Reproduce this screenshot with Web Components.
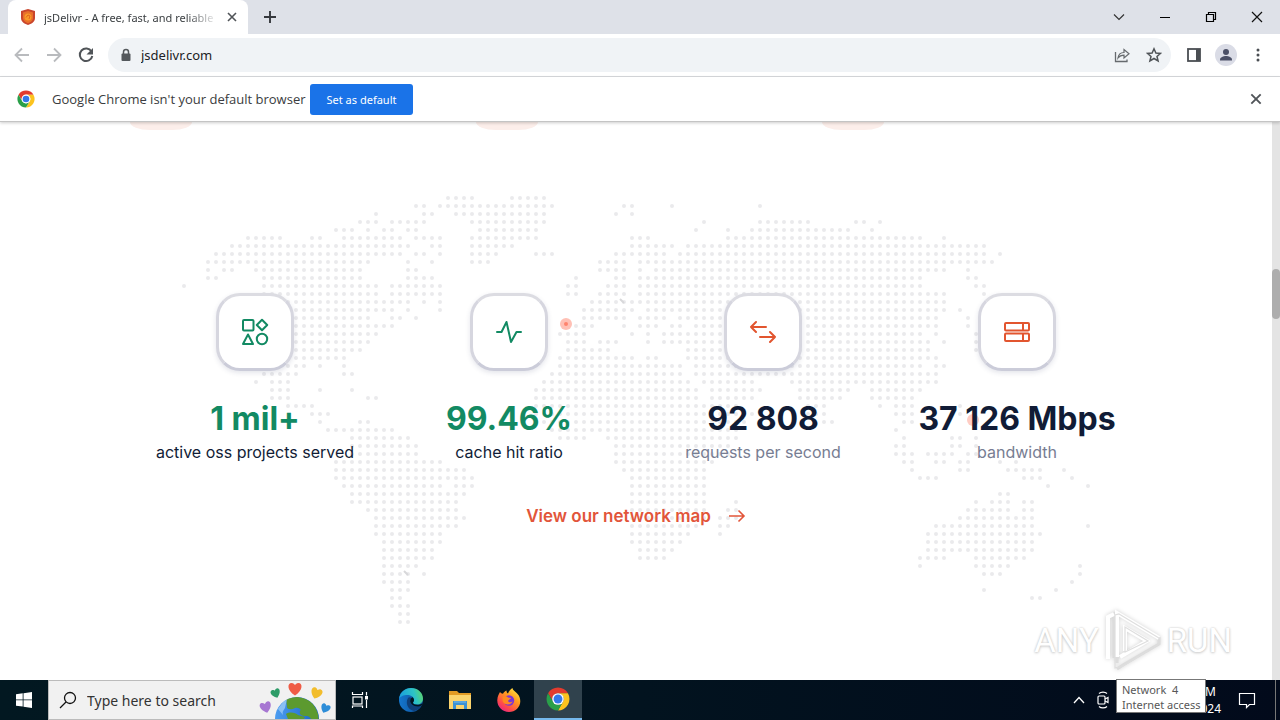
<!DOCTYPE html>
<html lang="en">
<head>
<meta charset="utf-8">
<title>jsDelivr - A free, fast, and reliable CDN</title>
<style>
html, body { margin: 0; height: 100%; }
body { font-family: "Noto Sans", "Open Sans", sans-serif; background: #fff; overflow: hidden; }
</style>
</head>
<body>
<desktop-screen></desktop-screen>
<script>
const chromeArc = 'M4.95 13A22 22 0 0 1 43.05 13L24 13A11 11 0 0 0 14.47 29.5Z';
const ICONS = {
  shield: ['0 0 16 16', '<path d="M8 0 15 2v7c0 4-4 6-7 7-3-1-7-3-7-7V2z" fill="#c9452c"/><path d="M8 2l5 1.500v5.500c0 3-3 4.500-5 5.300-2-.8-5-2.300-5-5.300V3.500z" fill="#e8702a"/><circle cx="8" cy="8" r="3.500" fill="#f99a28"/><path d="M6 8.500 8 6l2 1-1 3" stroke="#e0641f" fill="none"/>'],
  close: ['0 0 12 12', '<path d="M2 2l8 8M10 2l-8 8" stroke="#505458" stroke-width="1.600"/>'],
  plus: ['0 0 12 12', '<path d="M6 0v12M0 6h12" stroke="#35383d" stroke-width="1.900"/>'],
  chevron: ['0 0 12 12', '<path d="M1 3.500l5 5 5-5" stroke="#333" fill="none" stroke-width="1.200"/>'],
  minimize: ['0 0 12 12', '<path d="M1 6.500h10" stroke="#000"/>'],
  restore: ['0 0 12 12', '<path d="M1.500 3.500h7v7h-7zM3.500 3.500v-2h7v7h-2" stroke="#000" fill="none" stroke-width="1.200"/>'],
  winclose: ['0 0 12 12', '<path d="M1 1l10 10M11 1L1 11" stroke="#111" stroke-width="1.200"/>'],
  back: ['0 0 16 16', '<path d="M15 8H2M8 1.500 1.500 8 8 14.500" stroke="#b9bbbe" fill="none" stroke-width="1.800"/>'],
  forward: ['0 0 16 16', '<path d="M1 8h13M8 1.500 14.500 8 8 14.500" stroke="#b9bbbe" fill="none" stroke-width="1.800"/>'],
  reload: ['0 0 16 16', '<path d="M13.500 4.500A6.300 6.300 0 1 0 14.300 9" stroke="#505458" fill="none" stroke-width="2"/><path d="M15 1v6.500H8.500z" fill="#505458"/>'],
  lock: ['0 0 12 14', '<path d="M3.500 6V4a2.500 2.500 0 0 1 5 0v2" stroke="#54585c" fill="none" stroke-width="1.500"/><rect x="1.500" y="5.500" width="9" height="7.500" rx="1" fill="#54585c"/>'],
  share: ['0 0 16 16', '<path d="M1.500 5v9.500H13v-2" stroke="#666a6e" fill="none" stroke-width="1.300"/><path d="M4 11c.5-4 3-5.500 6-5.500V2.500l5 4.300-5 4.200V8.200C7.500 8.200 5.500 9 4 11z" fill="none" stroke="#666a6e" stroke-width="1.200"/>'],
  star: ['0 0 16 16', '<path d="M8 1.800 9.900 6l4.600.4-3.500 3 1.100 4.600L8 11.500 3.900 14 5 9.400l-3.500-3L6.100 6z" fill="none" stroke="#505458" stroke-width="1.500"/>'],
  panel: ['0 0 14 14', '<rect x="1" y="1" width="12" height="12" fill="#fff" stroke="#4a4e53" stroke-width="1.800"/><path d="M9 1h4v12H9z" fill="#4a4e53"/>'],
  person: ['0 0 22 22', '<circle cx="11" cy="11" r="11" fill="#dadce6"/><circle cx="11" cy="8" r="3" fill="#4a4f66"/><path d="M5 16.500v-1c0-2 3.500-3.500 6-3.500s6 1.500 6 3.500v1z" fill="#4a4f66"/>'],
  kebab: ['0 0 4 16', '<g fill="#4a4e53"><circle cx="2" cy="3" r="1.500"/><circle cx="2" cy="8" r="1.500"/><circle cx="2" cy="13" r="1.500"/></g>'],
  chrome: ['1 1 46 46', `<path d="${chromeArc}" fill="#e33b2e"/><path d="${chromeArc}" fill="#fcc31e" transform="rotate(120 24 24)"/><path d="${chromeArc}" fill="#2a9f49" transform="rotate(240 24 24)"/><circle cx="24" cy="24" r="11.200" fill="#fff"/><circle cx="24" cy="24" r="8.500" fill="#3478ea"/>`],
  shapes: ['0 0 28 28', '<g fill="none" stroke="#128a63" stroke-width="2" stroke-linejoin="round"><rect x="2" y="2" width="10.500" height="10.500" rx="1"/><path d="M21 1.800 26.200 7 21 12.200 15.800 7zM7 16.500 12 26H2z"/><circle cx="21" cy="21" r="5.200"/></g>'],
  pulse: ['0 0 28 28', '<path d="M2 14h4.500L11.500 4 16 24l5.500-10H26" fill="none" stroke="#128a63" stroke-width="2" stroke-linejoin="round" stroke-linecap="round"/>'],
  swap: ['0 0 28 28', '<path d="M17 9H2M7 4 2 9l5 5M11 19h15M21 14l5 5-5 5" fill="none" stroke="#e2552f" stroke-width="2" stroke-linecap="round" stroke-linejoin="round"/>'],
  server: ['0 0 28 28', '<g fill="none" stroke="#e2552f" stroke-width="2"><rect x="2" y="5" width="24" height="7.500" rx="1"/><rect x="2" y="15.500" width="24" height="7.500" rx="1"/><path d="M20 5v7.500M20 15.500V23"/></g>'],
  arrow: ['0 0 18 16', '<path d="M1 8h15M10.500 2.500 16 8l-5.500 5.500" fill="none" stroke="#e2553a" stroke-width="1.600"/>'],
  windows: ['0 0 16 16', '<path d="M0 2.200 6.700 1.300v6.200H0zM7.500 1.200 16 0v7.500H7.500zM0 8.300h6.700v6.300L0 13.700zM7.500 8.300H16V16l-8.500-1.200z" fill="#fff"/>'],
  search: ['0 0 18 18', '<circle cx="11" cy="7" r="5.500" fill="none" stroke="#111" stroke-width="1.300"/><path d="M7 11l-6 6" stroke="#111" stroke-width="1.300"/>'],
  taskview: ['0 0 18 18', '<g fill="none" stroke="#fff" stroke-width="1.200"><rect x="2" y="6" width="9" height="7"/><path d="M1.500 1v2.500h10V1M1.500 17v-2h10v2M15.500 1v3.500M15.500 9v8"/></g><path d="M14 5h3v3.500h-3z" fill="#fff"/>'],
  edge: ['0 0 24 24', '<defs><linearGradient id="a" x1="0" x2="1" y1=".3" y2=".1"><stop stop-color="#1a9fdc"/><stop offset=".6" stop-color="#2dc3c6"/><stop offset="1" stop-color="#62d860"/></linearGradient><linearGradient id="b" x1="0" x2="1"><stop stop-color="#1477cf"/><stop offset="1" stop-color="#0d4b93"/></linearGradient></defs><circle cx="12" cy="12" r="12" fill="url(#b)"/><path d="M0 11C1 4 6 0 12 0c7 0 12 5 12 10.500 0 4-3 6-6 6-2.500 0-4-.8-4-1.800 0-.7 1-1 1-2.700 0-2.500-2.500-5-6.500-5S1 8.500 0 11z" fill="url(#a)"/><path d="M9 10c-3 5 0 12 6 13 3-.5 6-2.500 7.500-5.500-4 2-10 1-11-3-.4-1.700 0-3.500 1-4.500-1-1-3-.8-3.500 0z" fill="#0f3f78"/><path d="M14 14.700c0-.7 1-1 1-2.700 0-1-.5-2-1.300-2.800-2 .5-3 3.300-2.200 5.300 1.300 3 5.500 4.500 9 3.700l2-.7 1-2c-5 2.500-9.500.7-9.500-.8z" fill="#021520"/>'],
  folder: ['0 0 22 20', '<path d="M0 1h8l2 2h12v5H0z" fill="#e29b24"/><rect y="5" width="22" height="14" fill="#fbd46d"/><path d="M4 11h14v8h-3v-4H7v4H4z" fill="#3d92d2"/><path d="M5 12h12" stroke="#79bbea"/>'],
  firefox: ['0 0 24 24', '<defs><linearGradient id="f" x1=".9" y1="0" x2=".2" y2="1"><stop stop-color="#fff04a"/><stop offset=".4" stop-color="#ff9a1f"/><stop offset=".75" stop-color="#ff4a4a"/><stop offset="1" stop-color="#e5218a"/></linearGradient></defs><path d="M3 4c1 1 1.500 1.500 3 1.700C7 4 8 3 9.500 2.500 9.500 4 10 5 11 5.500 12 3 13.500 1 15.500 0c0 3 5 4 7 9 3 8-3 15-10.500 15C5 24 0 18.500.3 12 .5 8 2 6 3 4z" fill="url(#f)"/><circle cx="12" cy="12.500" r="5.200" fill="#7a35d8"/><path d="M5.500 9c2-1.500 4-1 5.500.5 1.500.3 3 0 3 .8s-2.500 1.200-2.800 2.500c-.2 1.500 2.800 2 4.500.5-1 4-8 4.500-10 0z" fill="#ff8a20"/>'],
  up: ['0 0 12 12', '<path d="M1 9l5-5.500L11 9" stroke="#fff" fill="none" stroke-width="1.300"/>'],
  meet: ['0 0 14 18', '<g fill="none" stroke="#fff" stroke-width="1.200"><rect x="2" y="5" width="7" height="8" rx="1"/><path d="M9 8l3-1.500v5L9 10M3 2.500c2-1.800 6-1.800 8 0M3 15.500c2 1.800 6 1.800 8 0"/></g>'],
  notify: ['0 0 18 18', '<path d="M1.500 2.500h15v11h-5l-3 3v-3h-7z" stroke="#fff" fill="none" stroke-width="1.200"/>'],
  earth: ['0 0 76 38', '<defs><linearGradient id="g" x1="0" x2="1"><stop stop-color="#4c9df0"/><stop offset="1" stop-color="#1762c8"/></linearGradient><clipPath id="e"><circle cx="38" cy="38" r="22"/></clipPath><path id="h" d="M0 4C-6 0-5.500-5-2.500-5-1-5 0-3.500 0-3.500S1-5 2.500-5C5.500-5 6 0 0 4z"/></defs><circle cx="38" cy="38" r="22" fill="url(#g)"/><g clip-path="url(#e)"><path d="M27 18c6-3 22-4 29 8 5 9 4 15 2 18-4-3-5-7-10-9-5 0-8-1-7-5 2-2-2-4-5-3-3 2-9 2-8-2zM27 33c4-3 10-1 12 1l7 2-4 7H31z" fill="#5c9a2f"/><path d="M19 28c3-4 5-8 9-10l-2 9c-2 3-3 4-2 7z" fill="#8ac0f4"/></g><use href="#h" transform="translate(7 27) rotate(-15) scale(1.200)" fill="#a777d2"/><use href="#h" transform="translate(17 13) rotate(-20)" fill="#2e9c68"/><use href="#h" transform="translate(36 9) scale(1.400)" fill="#ef5c46"/><use href="#h" transform="translate(57 13) rotate(20) scale(1.200)" fill="#f2bd2c"/><use href="#h" transform="translate(66 28) rotate(25)" fill="#2d8dd8"/>'],
  play: ['0 0 60 64', '<path d="M5 50V8l6-3v44M14 54V4l42 25v6L20 56l-6 4" fill="none" stroke="#dcdcdc" stroke-width="3"/><path d="M5 50V8l6-3M14 48V4l42 25M22 42V19l22 13-27 16" fill="none" stroke="#fff" stroke-width="4"/><path d="M16 5l40 24v6L20 57l-8 2V6zM22 43V18l23 14z" fill="none" stroke="#dedede" stroke-width="1.200"/>']
};

function define(name, template, setup) {
  customElements.define(name, class extends HTMLElement {
    constructor() {
      super();
      this.attachShadow({ mode: 'open' });
    }
    connectedCallback() {
      this.shadowRoot.innerHTML = '<style>*{box-sizing:border-box}button,input{font:inherit;color:inherit;border:0;margin:0;padding:0;background:none;outline:0}button{display:grid;place-items:center}</style>' + template;
      if (setup) setup(this, this.shadowRoot);
    }
  });
}

/* Icon: name plus optional w / h in pixels */
define('ui-icon', '<style>:host{display:block;flex:none}svg{display:block}</style>', (el, root) => {
  const [box, body] = ICONS[el.getAttribute('name')];
  const w = el.getAttribute('w') || 16, h = el.getAttribute('h') || w;
  root.innerHTML += `<svg viewBox="${box}" width="${w}" height="${h}" aria-hidden="true">${body}</svg>`;
});

define('tab-strip', `<style>
:host{display:flex;align-items:center;height:34px;background:#dee1e8;padding-left:8px;color:#3c4043;font-size:11px}
.tab{display:flex;align-items:center;align-self:stretch;width:240px;padding:0 10px 0 12px;background:#fff;border-radius:8px 8px 0 0}
.title{flex:1;margin:0 8px;white-space:nowrap;overflow:hidden;-webkit-mask-image:linear-gradient(90deg,#000 82%,transparent)}
.new{margin-left:16px}
.controls{display:flex;margin-left:auto}
.controls button{width:46px;height:28px}
</style>
<div class="tab"><ui-icon name="shield"></ui-icon><span class="title">jsDelivr - A free, fast, and reliable</span><button aria-label="Close tab"><ui-icon name="close" w="12"></ui-icon></button></div>
<button class="new" aria-label="New tab"><ui-icon name="plus" w="12"></ui-icon></button>
<div class="controls"><button aria-label="Search tabs"><ui-icon name="chevron" w="12"></ui-icon></button><button aria-label="Minimize"><ui-icon name="minimize" w="12"></ui-icon></button><button aria-label="Restore"><ui-icon name="restore" w="12"></ui-icon></button><button aria-label="Close"><ui-icon name="winclose" w="12"></ui-icon></button></div>`);

define('tool-bar', `<style>
:host{display:flex;align-items:center;height:43px;padding:0 11px 0 14px;gap:16px;background:#fff;border-bottom:1px solid #d8dadd;color:#202124;font-size:13px}
.omni{flex:1;display:flex;align-items:center;gap:9px;height:34px;border-radius:17px;background:#f0f3f6;padding:0 9px 0 12px;margin:0 -4px 0 -2px}
input{flex:1;min-width:0}
.omni button{margin-left:7px}
.right{display:flex;align-items:center;gap:10px}
.right button{width:22px}
</style>
<button aria-label="Back"><ui-icon name="back"></ui-icon></button><button aria-label="Forward"><ui-icon name="forward"></ui-icon></button><button aria-label="Reload"><ui-icon name="reload"></ui-icon></button>
<div class="omni"><ui-icon name="lock" w="12" h="14"></ui-icon><input aria-label="Address" value="jsdelivr.com"><button aria-label="Share"><ui-icon name="share"></ui-icon></button><button aria-label="Bookmark"><ui-icon name="star"></ui-icon></button></div>
<div class="right"><button aria-label="Side panel"><ui-icon name="panel" w="14"></ui-icon></button><button aria-label="Profile"><ui-icon name="person" w="22"></ui-icon></button><button aria-label="Menu"><ui-icon name="kebab" w="4" h="16"></ui-icon></button></div>`);

define('info-bar', `<style>
:host{display:flex;align-items:center;height:45px;padding:0 17px;background:#fff;border-bottom:1px solid #c4c4c4;box-shadow:0 1px 3px #0003;color:#3a3c40;font-size:13px;position:relative;z-index:1}
.text{width:246px;margin-left:17px;font-family:"Open Sans",sans-serif;white-space:nowrap}
.set{margin-left:12px;width:103px;height:31px;border-radius:3px;background:#1a73e8;color:#fff;font-size:11px}
.close{margin-left:auto}
</style>
<ui-icon name="chrome" w="18"></ui-icon><span class="text">Google Chrome isn't your default browser</span><button class="set">Set as default</button><button class="close" aria-label="Dismiss"><ui-icon name="close" w="14"></ui-icon></button>`);

/* World map: one entry per 8px row, each a list of column runs */
const MAP_ROWS = `33-36,41-45
29-30,32-46,55-56,61,72
24,30-31,34-45,54,56
22-24,26-30,36-45,65,72-78,84-85,87
19-21,23,25-26,28-29,37-44,64,68,71-83,86
8-12,16-17,20-27,29-32,36-44,56-58,68-92,95
6-28,31-32,36-41,56-61,63-100
4-27,29-30,32,36-39,44-46,54-60,62-100,102
3-23,28,31,36-38,52-55,57-101
3,5-6,9-22,28-29,52-55,57,59-95,98
3-4,10-22,28-31,49,54-55,57-92,98-99
0,10-24,26-32,48-49,53-55,57-92,99-100
10-24,26-32,48-49,52-55,57-95,100
10-28,30,32,51-95
10-26,28,32,50-56,58-95,97
10-23,26-27,29,50-55,57-60,62-94,98
10-26,49-51,55,57-59,61-62,64-94,98
10-24,47-50,56,58,60-92,94,99
10-23,48-50,52-54,58,60-93,95,99
10-22,48-53,63-93,99
10-20,47-56,58-59,63-94
10-15,17,20,47-62,64-92,94-95
10-14,20-21,46-62,64-94
9,11-13,45-63,65-71,76-94
11-13,17,21,44-64,66-72,77-83,86-92
11-13,23-24,44-64,66-71,77-82,86-91
13-16,44-69,78-80,87,89-91,97
16-18,44-71,78-80,89-91,97
17,22-23,44-70,80-81,90-91
18-26,46-69,89
21-28,47-50,53-69,90,96-97,99
21-29,54-68,89-90,96-97,99
21-29,54-68,89-91,93-96,98-99
19-32,54-66,90-91,94-95,97-98,102,104
19-35,55-65,91,97-98,103-107,110
19-36,56-65,92-94,105-107,111
20-32,34-36,56-65,108,113
21-35,56-65,102-103
21-34,56-65,69,99,101-103,105-106
23-34,56-65,68-69,98-103,105-106
24-35,56-65,67-69,97-106
24-34,56-64,67-68,94-106,113
24-32,56-63,67,93-107
25-32,56-62,93-106
25-31,57-61,93-106
25-31,57-60,92-95,99-105
25-29,92,99-103,112
25-28,30,100-102,112
25-28,111
26-28,100,109
26-27,106-107
26-28
27-28
27-28`;
define('world-map', '<style>:host{display:block}svg{display:block}</style>', (el, root) => {
  let d = '';
  MAP_ROWS.split('\n').forEach((row, r) => row.split(',').forEach(run => {
    const [a, b = a] = run.split('-').map(Number);
    for (let c = a; c <= b; c++) d += `M${12 + 8 * c} ${8 + 8 * r}h0`;
  }));
  root.innerHTML += `<svg width="928" height="444" viewBox="0 0 928 444" aria-hidden="true"><path d="${d}" stroke="#eaeaec" stroke-width="4" stroke-linecap="round"/><path d="M448 109l4 4M232 381l4 4" stroke="#d8d8da" stroke-width="2"/><g fill="#ff5a3d"><circle cx="394" cy="134" r="6" opacity=".38"/><circle cx="394" cy="134" r="2" opacity=".6"/><circle cx="801" cy="230" r="6" opacity=".3"/></g></svg>`;
});

define('stat-card', `<style>
:host{display:flex;flex-direction:column;align-items:center;white-space:nowrap;color:#111c36}
.box{display:grid;place-items:center;width:78px;height:78px;border:3px solid;border-color:#dcdce2 #d6d6df #cbccd9;border-radius:24px;background:#fff;box-shadow:0 2px 5px #2b2f6020}
.value{margin-top:28px;font-size:32px;line-height:40px;font-weight:700}
.label{margin-top:3px;font-size:16px;line-height:20px}
:host([tone=green]) .value{color:#128a63}
:host([tone=dark]) .label{color:#777d92}
</style><div class="box"><slot name="icon"></slot></div><div class="value"><slot></slot></div><div class="label"><slot name="label"></slot></div>`);

define('network-section', `<style>
:host{display:block;flex:1;position:relative;overflow:hidden;font-family:Inter,sans-serif}
.tops{display:grid;grid-template-columns:repeat(3,1fr);gap:24px;max-width:1016px;margin:0 auto;padding-left:2px}
.tops i{width:62px;height:8px;background:#fceeea;border-radius:0 0 20px 20px / 0 0 8px 8px}
world-map{position:absolute;top:68px;left:50%;transform:translateX(-50%)}
.content{position:relative;display:flex;flex-direction:column;align-items:center}
.stats{display:grid;grid-template-columns:repeat(4,1fr);width:100%;max-width:1016px;margin-top:163px}
a{display:flex;align-items:center;gap:17px;margin-top:44px;line-height:20px;font-size:17px;font-weight:600;color:#e2553a;text-decoration:none}
</style>
<world-map></world-map>
<div class="tops"><i></i><i></i><i></i></div>
<div class="content"><div class="stats">
<stat-card tone="green"><ui-icon slot="icon" name="shapes" w="28"></ui-icon>1 mil+<span slot="label">active oss projects served</span></stat-card>
<stat-card tone="green"><ui-icon slot="icon" name="pulse" w="28"></ui-icon>99.46%<span slot="label">cache hit ratio</span></stat-card>
<stat-card tone="dark"><ui-icon slot="icon" name="swap" w="28"></ui-icon>92 808<span slot="label">requests per second</span></stat-card>
<stat-card tone="dark"><ui-icon slot="icon" name="server" w="28"></ui-icon>37 126 Mbps<span slot="label">bandwidth</span></stat-card>
</div><a href="#network">View our network map<ui-icon name="arrow" w="18" h="16"></ui-icon></a></div>`);

define('water-mark', `<style>
:host{display:flex;align-items:center;gap:4px;font-family:Roboto,sans-serif;font-size:33px;line-height:64px;color:#fff;text-shadow:0 0 2px #c4c4c4,0 1px 3px #d0d0d0}
ui-icon{filter:drop-shadow(0 0 2px #d0d0d0)}
</style><span>ANY</span><ui-icon name="play" w="60" h="64"></ui-icon><span>RUN</span>`);

define('scroll-bar', `<style>
:host{display:flex;flex-direction:column;width:8px;background:#e4e4e4}
i{flex:0 0 26%}b{flex:0 0 50px;margin-top:2px;border-radius:4px;background:#adadad}
</style><i></i><b></b>`);

define('task-bar', `<style>
:host{display:flex;align-items:center;height:40px;position:relative;background:linear-gradient(90deg,#021821,#02131f 50%,#020a1b);color:#fff;font-size:12px}
button{height:40px;width:48px}
.search{display:flex;align-items:center;width:288px;height:40px;background:#f1f1f1;border:1px solid #bbb;padding-left:10px;color:#222;overflow:hidden}
input{flex:1;min-width:0;margin-left:10px;font-size:14px}
input::placeholder{color:#333;opacity:1}
.apps{display:flex;gap:1px}
.apps button:first-child{margin-right:2px}
.active{background:#30424d;border-bottom:2px solid #76b9ed}
.tray{display:flex;align-items:center;margin-left:auto}
.tray button{width:24px}
.clock{width:110px;padding-right:4px;text-align:right;line-height:17px}
.clock span{display:block}
.clock .time{padding-right:5px}
.tray .note{width:44px}
.edge{width:5px;height:40px;margin-left:6px;border-left:1px solid #777}
.tip{position:absolute;right:74px;top:-1px;width:90px;height:34px;padding:2px 5px;background:#fff;border:1px solid #777;color:#575757;font-size:11px;line-height:15px;white-space:pre}
</style>
<button aria-label="Start"><ui-icon name="windows"></ui-icon></button>
<label class="search"><ui-icon name="search" w="18"></ui-icon><input aria-label="Type here to search" placeholder="Type here to search"><ui-icon name="earth" w="76" h="38"></ui-icon></label>
<div class="apps"><button aria-label="Task View"><ui-icon name="taskview" w="18"></ui-icon></button><button aria-label="Edge"><ui-icon name="edge" w="24"></ui-icon></button><button aria-label="File Explorer"><ui-icon name="folder" w="22" h="20"></ui-icon></button><button aria-label="Firefox"><ui-icon name="firefox" w="24"></ui-icon></button><button class="active" aria-label="Chrome"><ui-icon name="chrome" w="24"></ui-icon></button></div>
<div class="tray"><button aria-label="Hidden icons"><ui-icon name="up" w="12"></ui-icon></button><button aria-label="Meet now"><ui-icon name="meet" w="14" h="18"></ui-icon></button><div class="clock"><span class="time">M</span><span>024</span></div><button class="note" aria-label="Notifications"><ui-icon name="notify" w="18"></ui-icon></button><span class="edge"></span></div>
<div class="tip" role="tooltip">Network  4
Internet access</div>`);

define('desktop-screen', `<style>
:host{display:flex;flex-direction:column;height:100vh}
.view{flex:1;display:flex;min-height:0}
water-mark{position:absolute;right:48px;bottom:47px}
</style>
<tab-strip></tab-strip><tool-bar></tool-bar><info-bar></info-bar>
<div class="view"><network-section></network-section><scroll-bar></scroll-bar></div>
<task-bar></task-bar><water-mark></water-mark>`);
</script>
</body>
</html>
